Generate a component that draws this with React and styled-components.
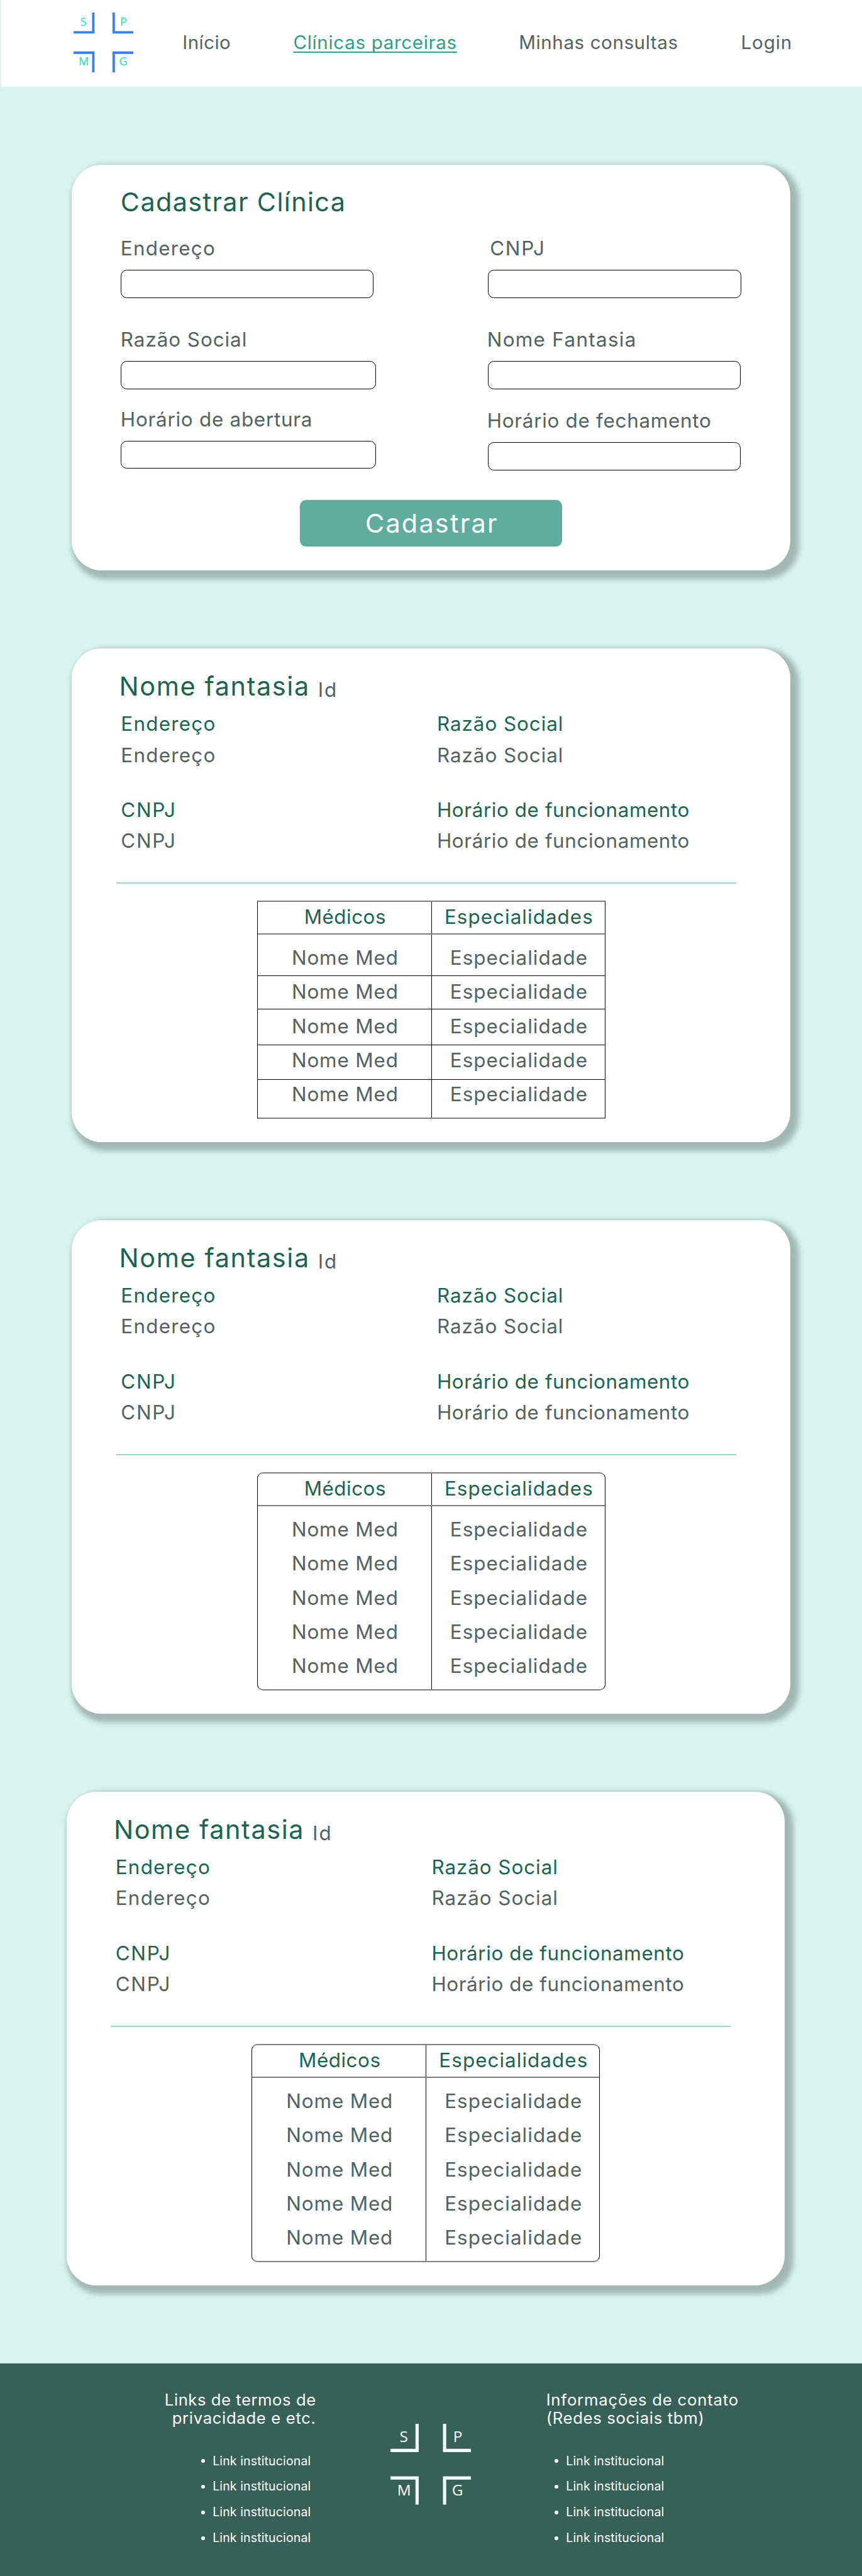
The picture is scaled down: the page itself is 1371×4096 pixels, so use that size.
import React from 'react';
import styled, { createGlobalStyle, css } from 'styled-components';

/* 1rem is ten design units: the 1440-unit layout fits a 1371px window. */
const GlobalStyle = createGlobalStyle`
  html { font-size: 9.52px; }
  body {
    margin: 0;
    background: #d7f5ee;
    font-family: Inter, 'Liberation Sans', sans-serif;
    font-weight: 370;
    color: #52635f;
  }
  *, *::before, *::after { box-sizing: border-box; }
  h1, h2, h3, p, ul, dl, dt, dd { margin: 0; padding: 0; font-weight: inherit; }
`;

const color = {
  dark: '#1c6452',
  text: '#52635f',
  active: '#2e9e88',
  button: '#5fad9f',
  divider: '#9fd3c7',
  footer: '#376157',
};

const tracked = css`
  letter-spacing: ${(p) => p.$track || 0}em;
  white-space: nowrap;
`;

const Page = styled.div`
  display: flex;
  flex-direction: column;
  min-height: 100vh;
  overflow: hidden;
`;

/* Header */
const Header = styled.header`
  display: flex;
  align-items: flex-start;
  height: 14.5rem;
  margin-left: 0.2rem;
  padding: 2.1rem 0 0 12.1rem;
  background: #fff;
`;

const Nav = styled.nav`
  display: grid;
  grid-template-columns: 18.5rem 37.7rem 37.1rem auto;
  margin: 2.94rem 0 0 8.2rem;
`;

const NavLink = styled.a`
  ${tracked}
  font-size: 3.1rem;
  line-height: 4rem;
  color: ${(p) => (p.$active ? color.active : color.text)};
  ${(p) =>
    p.$active &&
    css`
      text-decoration: underline;
      text-decoration-thickness: 2px;
      text-underline-offset: 0.42rem;
      text-decoration-skip-ink: none;
    `}
`;

const LogoSvg = styled.svg`
  display: block;
  flex: none;
  width: ${(p) => p.$size}rem;
  height: ${(p) => p.$size}rem;
  font-family: 'Open Sans', 'Noto Sans', sans-serif;
  font-weight: 400;
  font-size: 19px;
`;

function Logo({ size, bars, letters }) {
  return (
    <LogoSvg $size={size} viewBox="0 0 100 100">
      <g fill="none" stroke={bars} strokeWidth="4">
        <path d="M0 33H33V0" />
        <path d="M67 0V33H100" />
        <path d="M0 67H33V100" />
        <path d="M67 100V67H100" />
      </g>
      <g fill={letters} textAnchor="middle">
        <text x="16.5" y="22.5">S</text>
        <text x="83.4" y="22.5">P</text>
        <text x="17" y="88.7">M</text>
        <text x="83" y="88.7">G</text>
      </g>
    </LogoSvg>
  );
}

/* Cards */
const Cards = styled.main`
  display: flex;
  flex-direction: column;
  gap: 13.03rem;
  padding: 13.02rem 0 13.03rem 12rem;
`;

const Card = styled.section`
  display: flex;
  flex-direction: column;
  width: 120rem;
  height: ${(p) => p.$height}rem;
  margin-left: ${(p) => p.$shift || 0}rem;
  padding-top: 3.82rem;
  border-radius: 5rem;
  background: #fff;
  box-shadow: 0.75rem 0.75rem 0.9rem 0.65rem rgba(0, 0, 0, 0.25);
`;

const Title = styled.h2`
  ${tracked}
  font-size: 4.35rem;
  line-height: 5rem;
  color: ${color.dark};
`;

/* Registration form */
const Form = styled.form`
  display: flex;
  flex-direction: column;
  padding-left: 8.15rem;
`;

const FormColumns = styled.div`
  display: flex;
  margin-left: 0.05rem;
`;

const FormColumn = styled.div`
  width: 61.3rem;
  &:last-child { width: 43rem; }
`;

const Field = styled.label`
  display: block;
  margin-top: ${(p) => p.$gap}rem;
`;

const FieldLabel = styled.span`
  ${tracked}
  display: block;
  margin: 0 0 1.56rem ${(p) => p.$nudge}rem;
  font-size: 3.3rem;
  line-height: 4rem;
`;

const Input = styled.input`
  display: block;
  width: ${(p) => p.$width}rem;
  height: 4.7rem;
  padding: 0 1rem;
  border: 1px solid #000;
  border-radius: 1rem;
  background: #fff;
  font: inherit;
`;

const Submit = styled.button`
  width: 43.8rem;
  height: 7.8rem;
  margin: 4.92rem 0 0 29.95rem;
  padding: 0 0 0 0.3rem;
  border: 0;
  border-radius: 1rem;
  background: ${color.button};
  color: #fff;
  font: inherit;
  font-size: 4.35rem;
  line-height: 7.8rem;
  letter-spacing: 0.053em;
`;

/* Clinic card */
const Heading = styled.div`
  display: flex;
  align-items: flex-start;
  padding-left: 7.9rem;
`;

const ClinicId = styled.span`
  ${tracked}
  margin: 1.05rem 0 0 1.35rem;
  font-size: 3.3rem;
  line-height: 4rem;
`;

const Details = styled.dl`
  display: grid;
  grid-template-columns: 52.8rem auto;
  row-gap: 3.97rem;
  margin: 1.17rem 0 0 8.2rem;
  font-size: 3.3rem;
  line-height: 5.2rem;
`;

const Term = styled.dt`
  ${tracked}
  color: ${color.dark};
`;

const Description = styled.dd`
  ${tracked}
`;

const Divider = styled.hr`
  flex: none;
  width: 103.6rem;
  height: 2px;
  margin: 4.2rem 0 0 7.4rem;
  border: 0;
  background: ${color.divider};
`;

const Table = styled.div`
  width: 58.2rem;
  height: 36.4rem;
  margin: 2.88rem 0 0 30.95rem;
  border: 1px solid #000;
  border-width: 2px 1px;
  border-color: #808080 #000;
  border-radius: ${(p) => (p.$lined ? 0 : '1rem')};
  font-size: 3.3rem;
  line-height: 4rem;
`;

const Row = styled.div`
  display: flex;
  height: ${(p) => p.$height}rem;
  border-bottom: ${(p) => (p.$lined ? '1px solid #000' : '0')};
`;

const HeadRow = styled(Row)`
  border-bottom: 2px solid #808080;
  color: ${color.dark};
`;

const Cell = styled.div`
  ${tracked}
  flex: 1;
  padding: ${(p) => p.$pad}rem 0 0 0.2rem;
  text-align: center;
  &:first-child {
    flex: 0 0 29.1rem;
    border-right: 1px solid #000;
  }
`;

/* Footer */
const Footer = styled.footer`
  display: flex;
  flex: 1;
  align-items: flex-start;
  padding-top: 4.48rem;
  background: ${color.footer};
  color: #fff;
`;

const FooterColumn = styled.div`
  width: ${(p) => p.$width}rem;
`;

const FooterTitle = styled.h3`
  font-size: 2.7rem;
  line-height: 3.07rem;
  text-align: ${(p) => p.$align};
`;

const FooterLine = styled.span`
  ${tracked}
  display: block;
`;

const LinkList = styled.ul`
  margin: 3.48rem 0 0 ${(p) => p.$indent}rem;
  list-style: none;
`;

const LinkItem = styled.li`
  ${tracked}
  display: flex;
  align-items: center;
  gap: 1.3rem;
  font-size: 2.05rem;
  line-height: 4.3rem;
  &::before {
    content: '';
    width: 0.62rem;
    height: 0.62rem;
    border-radius: 50%;
    background: #fff;
  }
`;

const FooterLogo = styled.div`
  margin: 5.62rem 12.55rem 0 12.4rem;
`;

const navLinks = [
  { label: 'Início', track: 0.015 },
  { label: 'Clínicas parceiras', track: 0.0235 },
  { label: 'Minhas consultas', track: 0.0205 },
  { label: 'Login', track: 0.03 },
];
const activeLink = 'Clínicas parceiras';

const formColumns = [
  [
    { label: 'Endereço', track: 0.0395, gap: 3.18, width: 42.2, nudge: -0.05 },
    { label: 'Razão Social', track: 0.03, gap: 4.97, width: 42.6, nudge: -0.05 },
    { label: 'Horário de abertura', track: 0.0235, gap: 3.04, width: 42.6, nudge: -0.05 },
  ],
  [
    { label: 'CNPJ', track: 0.054, gap: 3.18, width: 42.3, nudge: 0.35 },
    { label: 'Nome Fantasia', track: 0.0415, gap: 4.97, width: 42.2, nudge: -0.12 },
    { label: 'Horário de fechamento', track: 0.0225, gap: 3.32, width: 42.2, nudge: -0.12 },
  ],
];

const details = [
  { label: 'Endereço', track: 0.0395 },
  { label: 'Razão Social', track: 0.03 },
  { label: 'CNPJ', track: 0.054 },
  { label: 'Horário de funcionamento', track: 0.0185 },
];

const rows = [
  { height: 6.98, pad: 1.85 },
  { height: 5.57, pad: 0.62 },
  { height: 5.95, pad: 0.8 },
  { height: 5.78, pad: 0.5 },
  { height: 6.3, pad: 0.43 },
];

const links = ['Link institucional', 'Link institucional', 'Link institucional', 'Link institucional'];

function ClinicCard({ lined, shift }) {
  return (
    <Card $height={82.45} $shift={shift}>
      <Heading>
        <Title $track={0.0385}>Nome fantasia</Title>
        <ClinicId $track={0.06}>Id</ClinicId>
      </Heading>
      <Details>
        {details.map((d) => (
          <div key={d.label}>
            <Term $track={d.track}>{d.label}</Term>
            <Description $track={d.track}>{d.label}</Description>
          </div>
        ))}
      </Details>
      <Divider />
      <Table $lined={lined}>
        <HeadRow $height={5.45}>
          <Cell $pad={0.5} $track={0.016}>Médicos</Cell>
          <Cell $pad={0.5} $track={0.033}>Especialidades</Cell>
        </HeadRow>
        {rows.map((r, i) => (
          <Row key={i} $height={r.height} $lined={lined && i < rows.length - 1}>
            <Cell $pad={r.pad} $track={0.027}>Nome Med</Cell>
            <Cell $pad={r.pad} $track={0.033}>Especialidade</Cell>
          </Row>
        ))}
      </Table>
    </Card>
  );
}

function FooterLinks({ indent }) {
  return (
    <LinkList $indent={indent}>
      {links.map((label, i) => (
        <LinkItem key={i} $track={0.007}>{label}</LinkItem>
      ))}
    </LinkList>
  );
}

export default function App() {
  return (
    <Page>
      <GlobalStyle />
      <Header>
        <Logo size={10} bars="#3381ff" letters="#1fe0b0" />
        <Nav>
          {navLinks.map((l) => (
            <NavLink key={l.label} $track={l.track} $active={l.label === activeLink}>{l.label}</NavLink>
          ))}
        </Nav>
      </Header>
      <Cards>
        <Card $height={67.8}>
          <Form>
            <Title $track={0.0325}>Cadastrar Clínica</Title>
            <FormColumns>
              {formColumns.map((fields, i) => (
                <FormColumn key={i}>
                  {fields.map((f) => (
                    <Field key={f.label} $gap={f.gap}>
                      <FieldLabel $track={f.track} $nudge={f.nudge}>{f.label}</FieldLabel>
                      <Input $width={f.width} />
                    </Field>
                  ))}
                </FormColumn>
              ))}
            </FormColumns>
            <Submit type="button">Cadastrar</Submit>
          </Form>
        </Card>
        <ClinicCard lined />
        <ClinicCard />
        <ClinicCard shift={-0.9} />
      </Cards>
      <Footer>
        <FooterColumn $width={52.8}>
          <FooterTitle $align="right">
            <FooterLine $track={0.0205}>Links de termos de</FooterLine>
            <FooterLine $track={0.0255}>privacidade e etc.</FooterLine>
          </FooterTitle>
          <FooterLinks indent={33.6} />
        </FooterColumn>
        <FooterLogo>
          <Logo size={13.5} bars="#f4fafd" letters="#fff" />
        </FooterLogo>
        <FooterColumn $width={40}>
          <FooterTitle $align="left">
            <FooterLine $track={0.031}>Informações de contato</FooterLine>
            <FooterLine $track={0.0255}>(Redes sociais tbm)</FooterLine>
          </FooterTitle>
          <FooterLinks indent={1.4} />
        </FooterColumn>
      </Footer>
    </Page>
  );
}
